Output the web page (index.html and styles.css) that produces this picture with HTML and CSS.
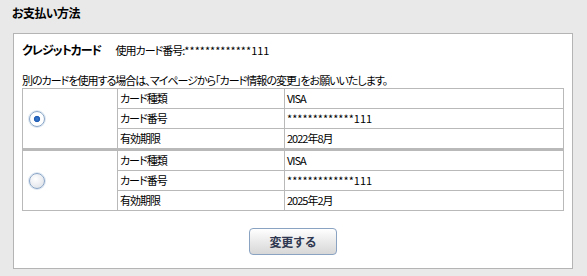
FILE: index.html
```html
<!DOCTYPE html>
<html lang="ja">
<head>
<meta charset="UTF-8">
<title>お支払い方法</title>
<link rel="stylesheet" href="styles.css">
</head>
<body>
  <h2 class="section-title">お支払い方法</h2>

  <div class="panel">
    <div class="card-head">
      <span class="card-head-label">クレジットカード</span>
      <span class="card-head-number">使用カード番号:<span class="num">*************111</span></span>
    </div>

    <p class="note">別のカードを使用する場合は、マイページから「カード情報の変更」をお願いいたします。</p>

    <table class="card-table">
      <tr>
        <td class="card-select" rowspan="3"><input type="radio" name="card" checked></td>
        <td class="card-label">カード種類</td>
        <td class="card-value">VISA</td>
      </tr>
      <tr>
        <td class="card-label">カード番号</td>
        <td class="card-value"><span class="num">*************111</span></td>
      </tr>
      <tr>
        <td class="card-label">有効期限</td>
        <td class="card-value">2022年8月</td>
      </tr>
    </table>

    <table class="card-table">
      <tr>
        <td class="card-select" rowspan="3"><input type="radio" name="card"></td>
        <td class="card-label">カード種類</td>
        <td class="card-value">VISA</td>
      </tr>
      <tr>
        <td class="card-label">カード番号</td>
        <td class="card-value"><span class="num">*************111</span></td>
      </tr>
      <tr>
        <td class="card-label">有効期限</td>
        <td class="card-value">2025年2月</td>
      </tr>
    </table>

    <div class="actions">
      <button type="button" class="change-btn">変更する</button>
    </div>
  </div>
</body>
</html>
```

FILE: styles.css
```css
body {
  margin: 0;
  padding: 0;
  background: #e9e9e9;
  color: #000;
  font-family: "Noto Sans CJK JP", "Liberation Sans", sans-serif;
  font-size: 11px;
  letter-spacing: -1px;
  font-feature-settings: "palt";
}

/* 伏せ字の番号は字間を詰めない */
.num {
  letter-spacing: 0;
}

/* 見出し */
.section-title {
  margin: 0;
  padding: 4px 12px 11px;
  font-size: 12px;
  line-height: 18px;
  font-weight: bold;
  letter-spacing: -0.6px;
}

/* 白いパネル */
.panel {
  margin: 0 14px 0 13px;
  background: #fff;
  border: 1px solid #b4b4b4;
  padding: 8px 8px 13px;
}

.card-head {
  line-height: 16px;
}
.card-head-label {
  font-size: 12px;
  font-weight: bold;
  margin-right: 13px;
}

.note {
  margin: 15px 0 1px;
  line-height: 14px;
}

/* カード情報テーブル */
.card-table {
  width: 100%;
  border-collapse: collapse;
}
.card-table + .card-table {
  border-top: 2px solid #b9b9b9;
}
.card-table td {
  border: 1px solid #b9b9b9;
  height: 19px;
  padding: 0 2px;
  line-height: 19px;
}
.card-select {
  width: 90px;
  vertical-align: middle;
}
.card-label {
  width: 162px;
}

/* ラジオボタン */
.card-select input {
  -webkit-appearance: none;
  appearance: none;
  display: block;
  width: 16px;
  height: 16px;
  margin: 0 0 0 4px;
  border: 1px solid #8aa6c6;
  border-radius: 50%;
  background: radial-gradient(circle at 40% 35%, #ffffff 0%, #e4e7ec 70%, #c9d0da 100%);
  box-shadow: 0 0 0 1px #dde7f2;
}
.card-select input:checked {
  background: radial-gradient(circle, #3b7bd0 0%, #1e5cb3 28%, #ffffff 36%, #ffffff 60%, #dfe8f3 100%);
}

/* 変更ボタン */
.actions {
  margin-top: 17px;
  text-align: center;
}
.change-btn {
  width: 88px;
  height: 27px;
  border: 1px solid #8aa3c2;
  border-radius: 4px;
  background: linear-gradient(#ffffff, #e6e6e6 60%, #d7d7d7);
  color: #2f3850;
  font-family: "Noto Sans CJK JP", sans-serif;
  font-size: 12px;
  font-weight: bold;
  letter-spacing: -0.3px;
  cursor: pointer;
}
```
